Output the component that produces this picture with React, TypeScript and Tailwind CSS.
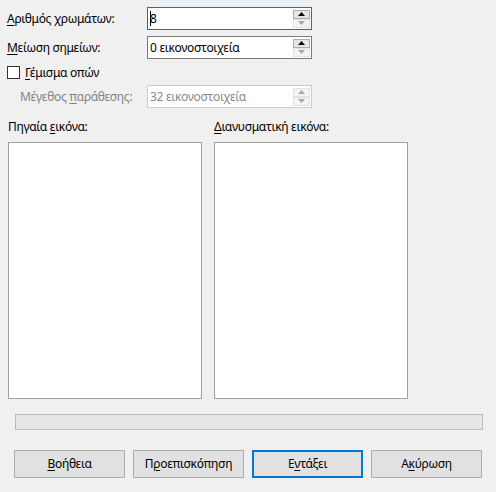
import React from "react";

function U({ children }: { children: React.ReactNode }) {
  return <span className="underline underline-offset-[2px] decoration-1">{children}</span>;
}

function Spin({ disabled }: { disabled?: boolean }) {
  return (
    <div className="flex flex-col gap-0 mr-[1px]">
      <div
        className={
          "w-[17px] h-[9px] border flex items-center justify-center " +
          (disabled ? "border-[#e2e2e2] bg-[#f4f4f4]" : "border-[#adadad] bg-[#e5e5e5]")
        }
      >
        <svg width="7" height="4" viewBox="0 0 7 4">
          <polygon points="0,4 7,4 3.5,0" fill={disabled ? "#a8a8a8" : "#000"} />
        </svg>
      </div>
      <div className="w-[17px] h-[9px] border border-[#e2e2e2] bg-[#f4f4f4] flex items-center justify-center">
        <svg width="7" height="4" viewBox="0 0 7 4">
          <polygon points="0,0 7,0 3.5,4" fill="#a8a8a8" />
        </svg>
      </div>
    </div>
  );
}

function SpinInput({
  value,
  border,
  disabled,
  caret,
}: {
  value: string;
  border: string;
  disabled?: boolean;
  caret?: boolean;
}) {
  return (
    <div
      className={
        "w-[165px] h-[23px] border bg-white flex items-center justify-between pl-[2px] " + border
      }
    >
      <div className={"flex items-center " + (disabled ? "text-[#8a8a8a]" : "text-black")}>
        {caret && <span className="w-[1px] h-[15px] bg-black mr-[-1px]" />}
        <span>{value}</span>
      </div>
      <Spin disabled={disabled} />
    </div>
  );
}

function Btn({ children, primary }: { children: React.ReactNode; primary?: boolean }) {
  return (
    <div
      className={
        "w-[111px] h-[28px] flex items-center justify-center bg-[#e1e1e1] " +
        (primary ? "border-2 border-[#0078d7]" : "border border-[#adadad]")
      }
    >
      {children}
    </div>
  );
}

export default function App() {
  return (
    <div
      className="w-[496px] h-[492px] bg-[#f0f0f0] text-[12px] tracking-[-0.3px] text-black leading-[16px] flex flex-col"
      style={{ fontFamily: '"Noto Sans", "Open Sans", sans-serif' }}
    >
      <div className="pt-[7px] pl-[7px] flex flex-col">
        <div className="flex items-center h-[23px]">
          <div className="w-[140px]">
            <U>Α</U>ριθμός χρωμάτων:
          </div>
          <SpinInput value="8" border="border-[#0078d7]" caret />
        </div>
        <div className="flex items-center h-[23px] mt-[6px]">
          <div className="w-[140px]">
            <U>Μ</U>είωση σημείων:
          </div>
          <SpinInput value="0 εικονοστοιχεία" border="border-[#7a7a7a]" />
        </div>
        <div className="flex items-center h-[21px] mt-[3px]">
          <div className="w-[13px] h-[13px] border border-[#333] bg-white" />
          <div className="ml-[5px]">
            <U>Γ</U>έμισμα οπών
          </div>
        </div>
        <div className="flex items-center h-[23px] mt-[2px]">
          <div className="w-[140px] pl-[13px] text-[#838383]">
            Μέγεθος <U>π</U>αράθεσης:
          </div>
          <SpinInput value="32 εικονοστοιχεία" border="border-[#cccccc]" disabled />
        </div>
      </div>

      <div className="flex gap-[12px] pl-[8px] mt-[11px]">
        <div className="flex flex-col">
          <div className="h-[16px]">
            Πηγαία <U>ε</U>ικόνα:
          </div>
          <div className="w-[194px] h-[257px] mt-[7px] bg-white border border-[#a0a0a0]" />
        </div>
        <div className="flex flex-col">
          <div className="h-[16px]">
            <U>Δ</U>ιανυσματική εικόνα:
          </div>
          <div className="w-[194px] h-[257px] mt-[7px] bg-white border border-[#a0a0a0]" />
        </div>
      </div>

      <div className="ml-[15px] mt-[15px] w-[468px] h-[16px] bg-[#e6e6e6] border border-[#bcbcbc]" />

      <div className="flex gap-[8px] ml-[14px] mt-[20px]">
        <Btn>
          <U>Β</U>οήθεια
        </Btn>
        <Btn>
          Π<U>ρ</U>οεπισκόπηση
        </Btn>
        <Btn primary>
          Ε<U>ν</U>τάξει
        </Btn>
        <Btn>
          Α<U>κ</U>ύρωση
        </Btn>
      </div>
    </div>
  );
}
